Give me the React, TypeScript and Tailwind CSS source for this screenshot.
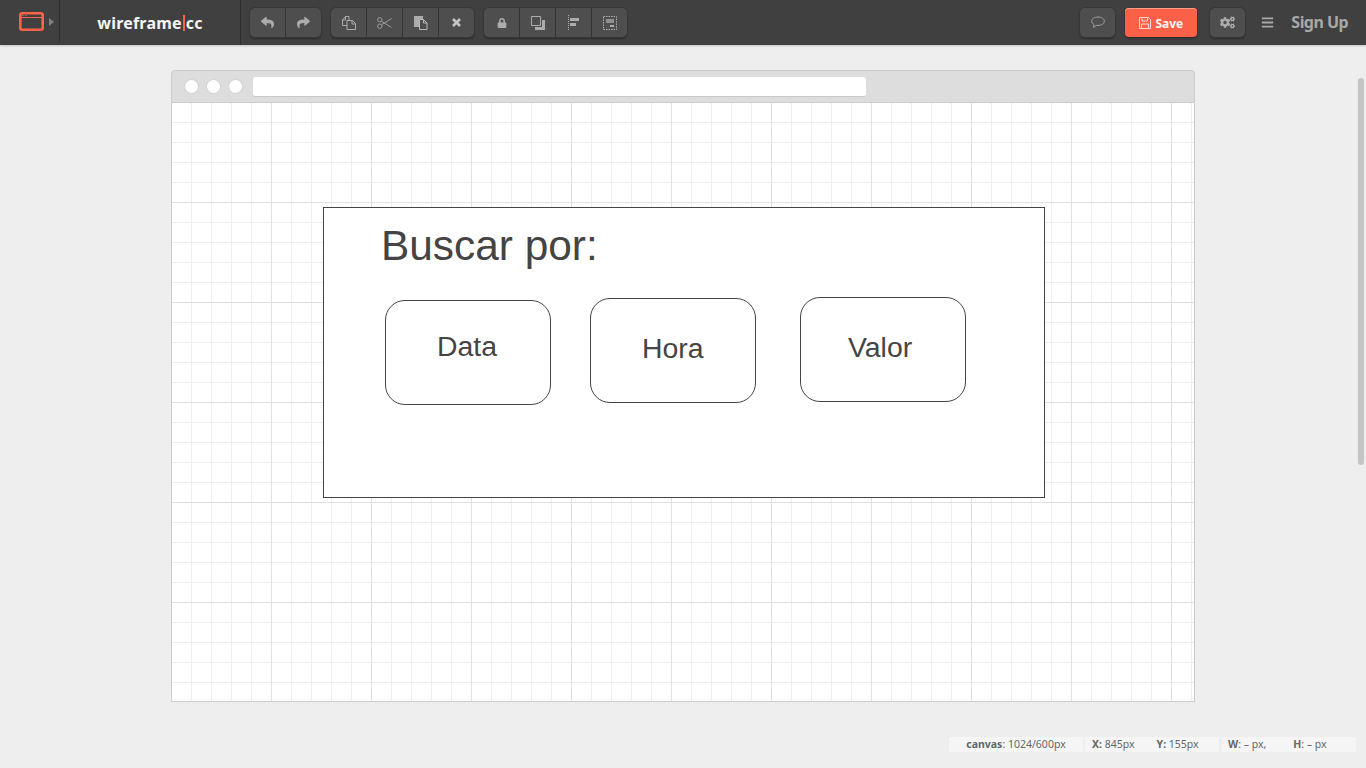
import React from 'react';
import { FaReply, FaShare, FaLock, FaCogs, FaBars } from 'react-icons/fa';

const ToolButton = ({ children, last }: { children: React.ReactNode; last?: boolean }) => (
  <div className={`h-full flex items-center justify-center text-[#acacac] ${last ? 'w-[35px]' : 'w-9 border-r border-[#333333]'}`}>
    {children}
  </div>
);

const ToolGroup = ({ children }: { children: React.ReactNode }) => (
  <div className="flex h-[29px] rounded-[5px] bg-[#4e4e4e] shadow-[0_0_0_1px_#383838,0_2px_2px_#2a2a2a]">{children}</div>
);

const CopyIcon = () => (
  <svg width="14" height="14" viewBox="0 0 14 14" fill="none" stroke="#acacac">
    <path d="M3.500 0.500h3.500v3.500M5 9.500H0.500V4l3-3.500v3.500H0.500" />
    <path d="M5 4.500h5.500l3 3v6h-8.500zM10 4.500v3.500h3.500" />
  </svg>
);

const ScissorsIcon = () => (
  <svg width="15" height="12" viewBox="0 0 15 12" fill="none" stroke="#9c9c9c">
    <circle cx="2.800" cy="2.800" r="2.200" />
    <circle cx="2.800" cy="9.200" r="2.200" />
    <path d="M4.500 4.200L14.500 10.500M4.500 7.800L14.500 1.500" />
  </svg>
);

const PasteIcon = () => (
  <svg width="14" height="14" viewBox="0 0 14 14">
    <path d="M0 0h9v3H5v8H0z" fill="#acacac" />
    <path d="M5.500 3.500h4l3.500 3.500v6.500H5.500zM9.500 3.500V7H13" fill="none" stroke="#b8b8b8" />
  </svg>
);

const CloseIcon = () => (
  <svg width="9" height="9" viewBox="0 0 9 9">
    <path d="M1 1L8 8M8 1L1 8" stroke="#c4c4c4" strokeWidth="2.600" />
  </svg>
);

const LayerIcon = () => (
  <svg width="14" height="14" viewBox="0 0 14 14">
    <path d="M0.500 0.500h9v9h-9z" fill="none" stroke="#acacac" />
    <path d="M11 4h3v10H4v-3h7z" fill="#acacac" />
  </svg>
);

const AlignIcon = () => (
  <svg width="11" height="15" viewBox="0 0 11 15">
    <path d="M0.500 0v15" stroke="#acacac" strokeDasharray="1 1" />
    <path d="M2 3h9v3H2zM2 8h6v3H2z" fill="#acacac" />
  </svg>
);

const GroupIcon = () => (
  <svg width="14" height="14" viewBox="0 0 14 14">
    <path d="M0.500 0.500h13v13h-13z" fill="none" stroke="#acacac" strokeDasharray="1.500 1" />
    <path d="M3 3h8v4H3z" fill="#8f8f8f" />
    <path d="M7 9h4v2H7z" fill="#acacac" />
  </svg>
);

const CommentIcon = () => (
  <svg width="14" height="13" viewBox="0 0 14 13" fill="none" stroke="#a0a0a0">
    <path d="M7 1C3.500 1 0.700 2.800 0.700 5.200c0 1.400 1 2.500 2.300 3.200L2.500 11.500 5.500 9.300C6 9.400 6.500 9.400 7 9.400c3.500 0 6.300-1.800 6.300-4.200S10.500 1 7 1z" />
  </svg>
);

const SaveIcon = () => (
  <svg width="12" height="12" viewBox="0 0 12 12" fill="none" stroke="#ffd9d2">
    <path d="M0.500 0.500h9l2 2v9h-11z" />
    <path d="M3 0.500v3.500h5.500V0.500M2.500 11.500V7h7v4.500" />
  </svg>
);

const WireButton = ({ className }: { className: string }) => (
  <div className={`absolute w-[166px] h-[105px] bg-white border border-[#444444] rounded-[20px] ${className}`} />
);

const Dot = () => <div className="w-[13px] h-[13px] rounded-full bg-white shadow-[0_0_0_1px_#d4d4d4]" />;

export default function App() {
  return (
    <div className="relative h-[768px] overflow-hidden bg-[#eeeeee] font-['Liberation_Sans',sans-serif]">
      <header className="flex items-center h-[45px] bg-[#404040] shadow-[0_1px_2px_#c4c4c4]">
        <div className="flex items-center w-[60px] h-[42px] self-start border-r border-[#2e2e2e] pl-[19px]">
          <svg width="25" height="19" viewBox="0 0 25 19" fill="none" className="mt-[1px]">
            <rect x="1.300" y="1.300" width="22.400" height="16.400" rx="2" stroke="#ff6347" strokeWidth="2.600" />
            <path d="M1 5.500h23" stroke="#ff6347" />
            <path d="M3 3.500h1.500M6 3.500h1.500" stroke="#ffffff" strokeOpacity="0.300" />
          </svg>
          <div className="ml-[5px] mt-[2px] border-y-[4px] border-l-[5px] border-y-transparent border-l-[#808080]" />
        </div>
        <div className="flex items-center justify-center w-[181px] h-[45px] border-r border-[#2e2e2e] font-['Noto_Sans',sans-serif] font-bold text-[16px] tracking-[0.2px] text-[#f4f4f4]">
          wireframe<span className="w-[2px] h-[16px] mx-[1px] bg-[#fa6148]" />cc
        </div>
        <div className="flex gap-[10px] ml-[9px]">
          <ToolGroup>
            <ToolButton><FaReply size={13} /></ToolButton>
            <ToolButton last><FaShare size={13} /></ToolButton>
          </ToolGroup>
          <ToolGroup>
            <ToolButton><CopyIcon /></ToolButton>
            <ToolButton><ScissorsIcon /></ToolButton>
            <ToolButton><PasteIcon /></ToolButton>
            <ToolButton last><CloseIcon /></ToolButton>
          </ToolGroup>
          <ToolGroup>
            <ToolButton><FaLock size={10} /></ToolButton>
            <ToolButton><LayerIcon /></ToolButton>
            <ToolButton><AlignIcon /></ToolButton>
            <ToolButton last><GroupIcon /></ToolButton>
          </ToolGroup>
        </div>
        <div className="flex items-center ml-auto pr-[18px]">
          <ToolGroup>
            <ToolButton last><CommentIcon /></ToolButton>
          </ToolGroup>
          <div className="flex items-center justify-center gap-[4px] w-[72px] h-[29px] ml-[10px] rounded-[4px] bg-[#fa6148] shadow-[0_1px_2px_#222222,inset_0_1px_0_#ff9a88] text-[#fff4f2] font-['Noto_Sans',sans-serif] font-bold text-[12px]">
            <SaveIcon />
            <span className="mt-[2px]">Save</span>
          </div>
          <div className="ml-[13px]">
            <ToolGroup>
              <ToolButton last><FaCogs size={15} /></ToolButton>
            </ToolGroup>
          </div>
          <FaBars size={13} className="ml-[16px] text-[#a8a8a8]" />
          <span className="ml-[17px] -mt-[2px] font-['Noto_Sans',sans-serif] font-bold text-[16px] tracking-[-0.55px] text-[#a8a8a8]">Sign Up</span>
        </div>
      </header>

      <main className="w-[1024px] ml-[171px] mt-[25px]">
        <div className="flex items-center h-[33px] pl-[13px] gap-[9px] rounded-t-[4px] bg-[#dddddd] border border-[#cccccc]">
          <Dot />
          <Dot />
          <Dot />
          <div className="w-[613px] h-[20px] ml-[2px] rounded-[3px] bg-white border-b border-[#c8c8c8]" />
        </div>
        <div className="relative h-[599px] bg-white border-x border-b border-[#cccccc] bg-[size:100px_100px,100px_100px,20px_20px,20px_20px] [background-image:linear-gradient(to_right,transparent_99px,#e0e0e0_99px),linear-gradient(to_bottom,transparent_99px,#e0e0e0_99px),linear-gradient(to_right,transparent_19px,#eeeeee_19px),linear-gradient(to_bottom,transparent_19px,#eeeeee_19px)]">
          <div className="absolute left-[151px] top-[104px] w-[722px] h-[291px] bg-white border border-[#444444]" />
          <div className="absolute left-[209px] top-[118px] text-[42.4px] leading-[50px] text-[#444444]">Buscar por:</div>
          <WireButton className="left-[213px] top-[197px]" />
          <WireButton className="left-[418px] top-[195px]" />
          <WireButton className="left-[628px] top-[194px]" />
          <div className="absolute left-[265px] top-[226px] text-[28.4px] leading-[34px] text-[#444444]">Data</div>
          <div className="absolute left-[470px] top-[228px] text-[28.4px] leading-[34px] text-[#444444]">Hora</div>
          <div className="absolute left-[676px] top-[227px] text-[28.4px] leading-[34px] text-[#444444]">Valor</div>
        </div>
      </main>

      <footer className="flex justify-end gap-[2px] mt-[35px] pr-[10px] font-['Noto_Sans',sans-serif] text-[10.5px] leading-[15px] text-[#666666]">
        <div className="flex justify-center w-[134px] h-[15px] bg-[#f5f5f5]">
          <span><b>canvas</b>: 1024/600px</span>
        </div>
        <div className="flex w-[134px] h-[15px] pl-[7px] gap-[22px] bg-[#f5f5f5]">
          <span><b>X:</b> 845px</span>
          <span><b>Y:</b> 155px</span>
        </div>
        <div className="flex w-[134px] h-[15px] ml-[1px] pl-[6px] gap-[27px] bg-[#f5f5f5]">
          <span><b>W</b>: – px,</span>
          <span><b>H</b>: – px</span>
        </div>
      </footer>

      <div className="absolute right-[2px] top-[78px] w-[6px] h-[387px] rounded-[3px] bg-[#c4c4c4]" />
    </div>
  );
}
